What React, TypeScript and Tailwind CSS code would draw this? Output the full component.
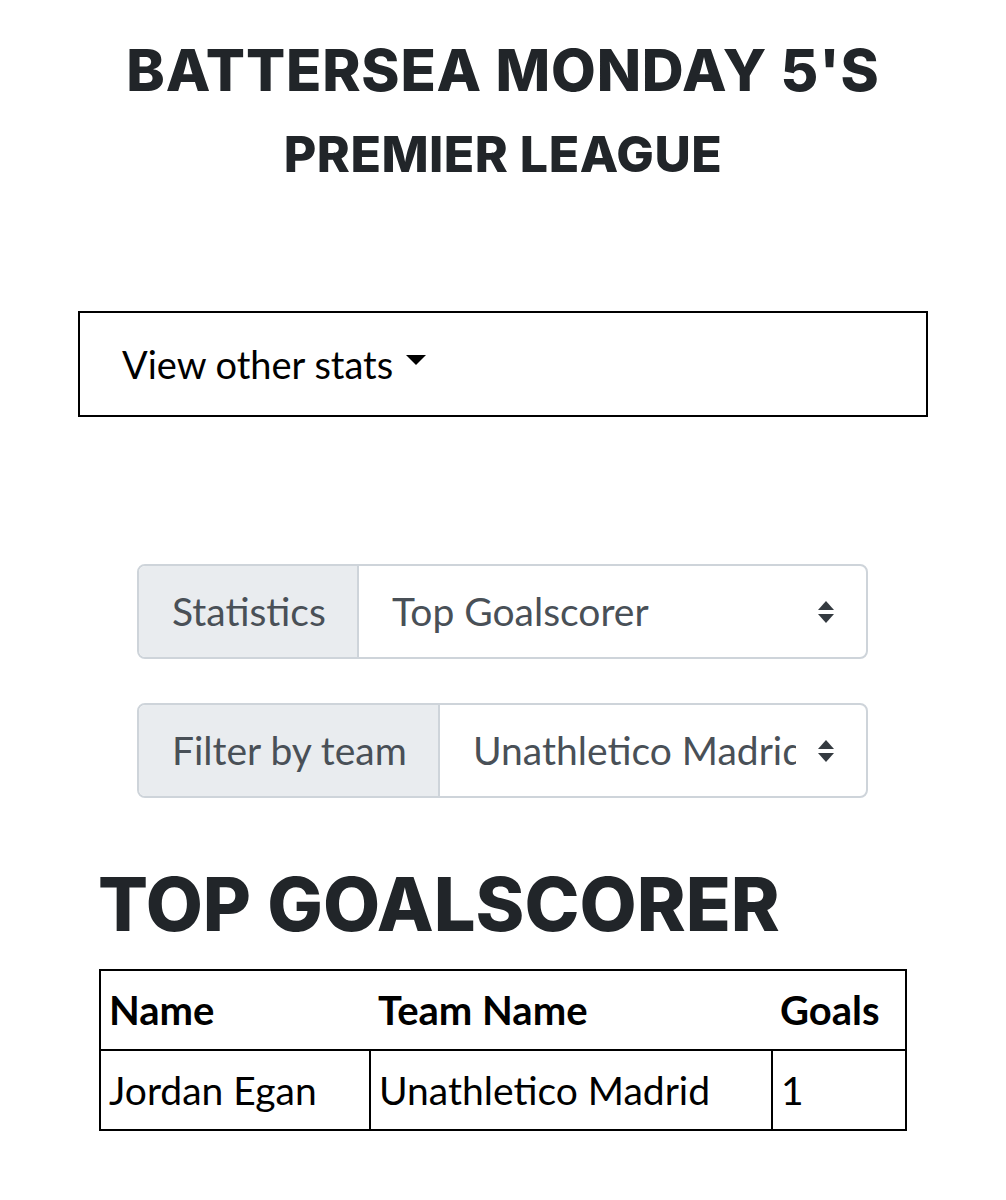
import React from "react";

const Arrows = () => (
  <svg width="20" height="26" viewBox="0 0 20 26" className="shrink-0">
    <path d="M10 2 L18 11 H2 Z" fill="#343a40" />
    <path d="M10 24 L18 15 H2 Z" fill="#343a40" />
  </svg>
);

export default function App() {
  const body = { fontFamily: "Lato, 'Noto Sans', sans-serif" };
  const head = { fontFamily: "Inter, 'Noto Sans', sans-serif" };
  return (
    <div className="w-[1006px] min-h-[1200px] bg-white" style={body}>
      <div className="flex flex-col items-center pt-[35px]">
        <h1 className="text-[58px] leading-[70px] font-extrabold uppercase text-[#212529] tracking-[0.8px]" style={head}>
          Battersea Monday 5's
        </h1>
        <h2 className="text-[50px] leading-[60px] font-extrabold uppercase text-[#212529] mt-[19px] tracking-[0.5px]" style={head}>
          Premier League
        </h2>
      </div>

      <div className="mt-[127px] mx-[78px] w-[850px] h-[106px] border-2 border-black flex items-center pl-[42px]">
        <span className="text-[38px] text-black">View other stats</span>
        <span className="ml-[13px] mb-[8px] w-0 h-0 border-l-[10px] border-r-[10px] border-t-[10px] border-l-transparent border-r-transparent border-t-black" />
      </div>

      <div className="mt-[147px] ml-[137px] w-[731px] flex flex-col gap-[44px]">
        <div className="flex h-[95px] border-2 border-[#ced4da] rounded-[8px] overflow-hidden">
          <div className="w-[220px] bg-[#e9ecef] border-r-2 border-[#ced4da] flex items-center pl-[33px] text-[39px] text-[#495057]">
            Statistics
          </div>
          <div className="flex-1 flex items-center pl-[33px] pr-[30px] text-[39px] text-[#495057]">
            <span className="flex-1">Top Goalscorer</span>
            <Arrows />
          </div>
        </div>
        <div className="flex h-[95px] border-2 border-[#ced4da] rounded-[8px] overflow-hidden">
          <div className="w-[301px] bg-[#e9ecef] border-r-2 border-[#ced4da] flex items-center pl-[33px] text-[39px] text-[#495057] whitespace-nowrap">
            Filter by team
          </div>
          <div className="flex-1 flex items-center pl-[33px] pr-[30px] text-[39px] text-[#495057] min-w-0">
            <span className="flex-1 overflow-hidden whitespace-nowrap min-w-0 mr-[20px]">Unathletico Madrid</span>
            <Arrows />
          </div>
        </div>
      </div>

      <h3 className="mt-[61px] ml-[98px] text-[74px] leading-[90px] font-extrabold uppercase text-[#212529]" style={head}>
        Top Goalscorer
      </h3>

      <table className="mt-[20px] ml-[99px] w-[808px] border-collapse text-black text-[39px]">
        <thead>
          <tr className="h-[80px] border-2 border-black">
            <th className="text-left font-bold text-[40px] pl-[8px] w-[270px]">Name</th>
            <th className="text-left font-bold text-[40px] pl-[8px] w-[402px]">Team Name</th>
            <th className="text-left font-bold text-[40px] pl-[8px]">Goals</th>
          </tr>
        </thead>
        <tbody>
          <tr className="h-[80px]">
            <td className="border-2 border-black pl-[8px]">Jordan Egan</td>
            <td className="border-2 border-black pl-[8px]">Unathletico Madrid</td>
            <td className="border-2 border-black pl-[8px]">1</td>
          </tr>
        </tbody>
      </table>
    </div>
  );
}
